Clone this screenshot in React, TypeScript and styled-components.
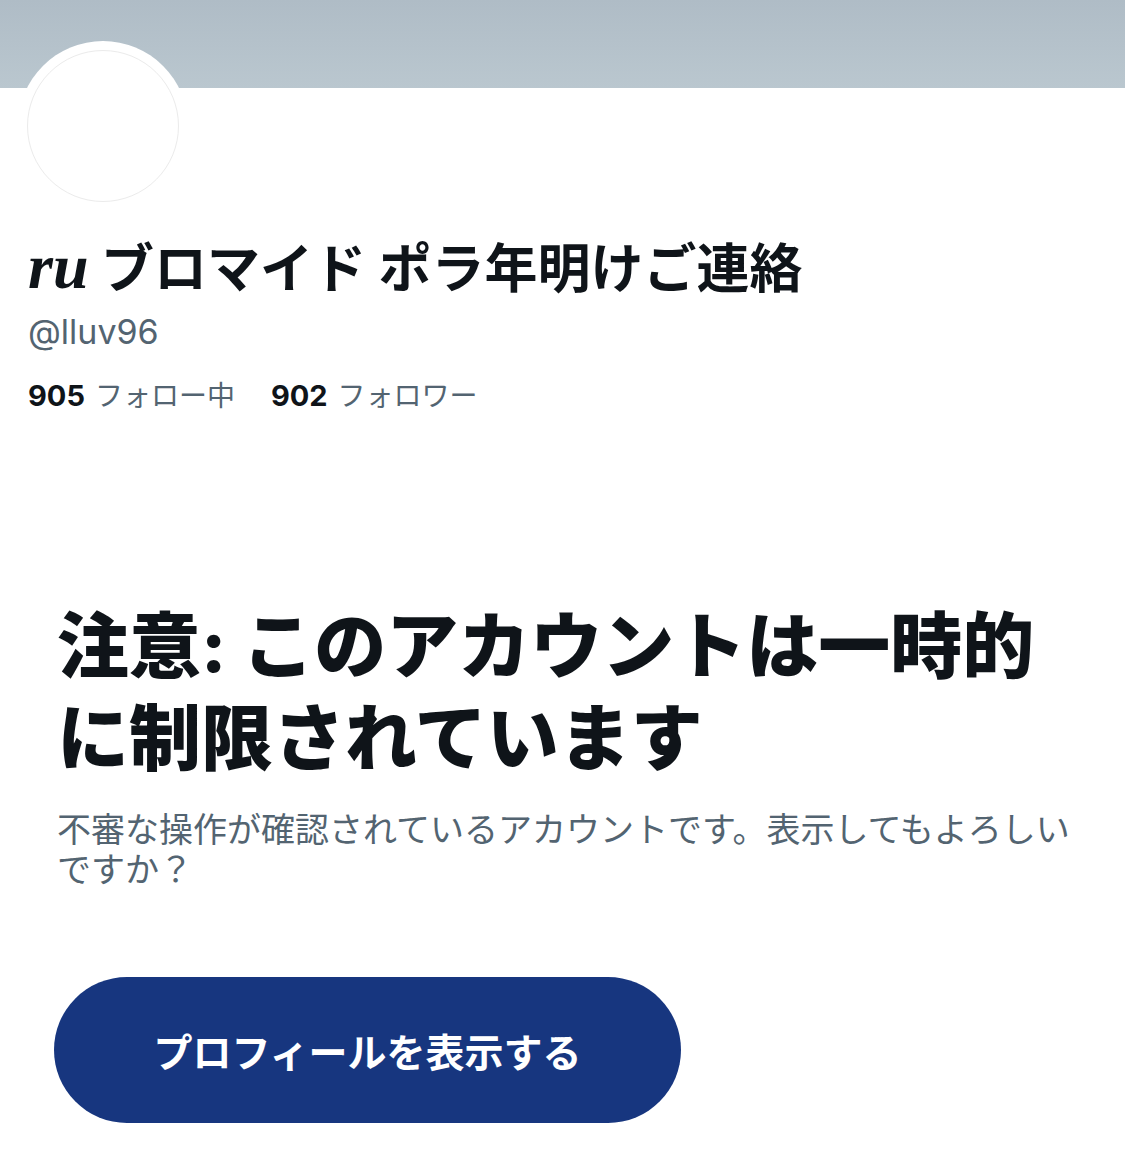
import React from 'react'
import styled, { createGlobalStyle } from 'styled-components'

const GlobalStyle = createGlobalStyle`
  html, body {
    margin: 0;
    padding: 0;
    background: #ffffff;
  }

  body {
    font-family: Inter, 'Noto Sans CJK JP', sans-serif;
    color: #0f1419;
  }
`

const Page = styled.div`
  width: 1125px;
  min-height: 1151px;
  background: #ffffff;
`

const Banner = styled.div`
  height: 88px;
  background: linear-gradient(180deg, #afbcc6 0%, #bac7cf 100%);
`

const Profile = styled.section`
  display: flex;
  flex-direction: column;
  align-items: flex-start;
  padding: 0 28px;
`

const AvatarRing = styled.div`
  width: 170px;
  height: 170px;
  margin-top: -47px;
  margin-left: -10px;
  padding: 9px;
  box-sizing: border-box;
  border-radius: 50%;
  background: #ffffff;
`

const AvatarImage = styled.div`
  width: 100%;
  height: 100%;
  box-sizing: border-box;
  border-radius: 50%;
  border: 1px solid #ebebeb;
  background: #ffffff;
`

const DisplayName = styled.h1`
  margin: 25px 0 0;
  font-family: Inter, 'Noto Sans CJK JP', sans-serif;
  font-size: 53px;
  font-weight: 700;
  line-height: 62px;
  color: #0f1419;
  white-space: nowrap;
`

const SerifMark = styled.span`
  font-family: 'Liberation Serif', 'DejaVu Serif', serif;
  font-style: italic;
  font-weight: 700;
  font-size: 64px;
`

const Handle = styled.div`
  margin-top: 12px;
  font-size: 34px;
  line-height: 40px;
  color: #536471;
`

const Stats = styled.div`
  display: flex;
  gap: 36px;
  margin-top: 26px;
`

const Stat = styled.div`
  display: flex;
  align-items: baseline;
  gap: 10px;
  font-size: 28px;
  line-height: 36px;
`

const StatCount = styled.span`
  font-size: 29px;
  font-weight: 700;
  color: #0f1419;
`

const StatLabel = styled.span`
  color: #536471;
`

const Notice = styled.section`
  padding: 0 36px 0 57px;
  margin-top: 186px;
`

const NoticeTitle = styled.h2`
  margin: 0;
  max-width: 1020px;
  font-size: 72px;
  font-weight: 800;
  line-height: 92px;
  color: #0f1419;
`

const NoticeBody = styled.p`
  margin: 26px 0 0;
  font-size: 34px;
  line-height: 40px;
  color: #536471;
`

const ViewButton = styled.button`
  display: flex;
  align-items: center;
  justify-content: center;
  width: 627px;
  height: 146px;
  margin-top: 87px;
  margin-left: -3px;
  border: none;
  border-radius: 73px;
  background: #17367f;
  color: #ffffff;
  font-family: Inter, 'Noto Sans CJK JP', sans-serif;
  font-size: 39px;
  font-weight: 700;
  cursor: pointer;
`

const App: React.FC = () => {
  return (
    <Page>
      <GlobalStyle />
      <Banner />
      <Profile>
        <AvatarRing>
          <AvatarImage />
        </AvatarRing>
        <DisplayName>
          <SerifMark>ru</SerifMark> ブロマイド ポラ年明けご連絡
        </DisplayName>
        <Handle>@lluv96</Handle>
        <Stats>
          <Stat>
            <StatCount>905</StatCount>
            <StatLabel>フォロー中</StatLabel>
          </Stat>
          <Stat>
            <StatCount>902</StatCount>
            <StatLabel>フォロワー</StatLabel>
          </Stat>
        </Stats>
      </Profile>
      <Notice>
        <NoticeTitle>注意: このアカウントは一時的に制限されています</NoticeTitle>
        <NoticeBody>
          不審な操作が確認されているアカウントです。表示してもよろしいですか？
        </NoticeBody>
        <ViewButton>プロフィールを表示する</ViewButton>
      </Notice>
    </Page>
  )
}

export default App
